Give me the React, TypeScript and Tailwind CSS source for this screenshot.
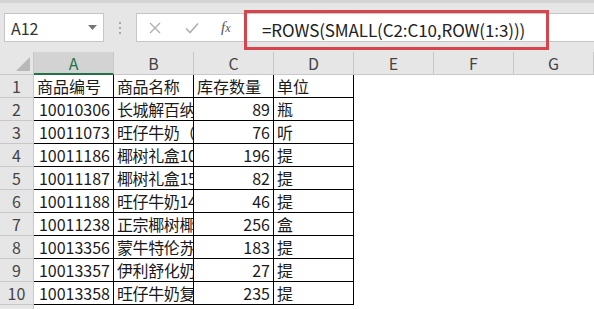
import React from 'react';

const rows: Array<[string, string, string, string]> = [
  ['商品编号', '商品名称', '库存数量', '单位'],
  ['10010306', '长城解百纳', '89', '瓶'],
  ['10011073', '旺仔牛奶（', '76', '听'],
  ['10011186', '椰树礼盒10', '196', '提'],
  ['10011187', '椰树礼盒15', '82', '提'],
  ['10011188', '旺仔牛奶14', '46', '提'],
  ['10011238', '正宗椰树椰', '256', '盒'],
  ['10013356', '蒙牛特伦苏', '183', '提'],
  ['10013357', '伊利舒化奶', '27', '提'],
  ['10013358', '旺仔牛奶复', '235', '提'],
];

const cols = ['A', 'B', 'C', 'D', 'E', 'F', 'G'];

const font = { fontFamily: '"Noto Sans CJK SC", "Noto Sans", sans-serif' };

function Toolbar() {
  return (
    <div className="h-[52px] bg-[#e6e6e6] border-t-[3px] border-[#d4d4d4] flex items-start pt-[10px] relative">
      {/* name box */}
      <div className="ml-[4px] w-[100px] h-[29px] bg-white border border-[#c6c6c6] flex items-center justify-between pl-[6px] pr-[6px]">
        <span className="text-[16px] text-[#333]">A12</span>
        <svg width="9" height="6" viewBox="0 0 9 6">
          <path d="M0 0 L9 0 L4.5 5 Z" fill="#777" />
        </svg>
      </div>
      {/* dots */}
      <div className="w-[32px] h-[29px] flex flex-col items-center justify-center gap-[3px]">
        <span className="w-[2px] h-[2px] bg-[#aaa]" />
        <span className="w-[2px] h-[2px] bg-[#aaa]" />
        <span className="w-[2px] h-[2px] bg-[#aaa]" />
      </div>
      {/* formula bar */}
      <div className="flex-1 h-[29px] bg-white border-y border-l border-[#c6c6c6] flex items-center">
        <div className="w-[108px] flex items-center">
          <svg className="ml-[12px]" width="12" height="12" viewBox="0 0 12 12">
            <path d="M1 1 L11 11 M11 1 L1 11" stroke="#b0b0b0" strokeWidth="1.4" />
          </svg>
          <svg className="ml-[24px]" width="14" height="12" viewBox="0 0 14 12">
            <path d="M1 6.5 L5 10.5 L13 1.5" stroke="#b0b0b0" strokeWidth="1.6" fill="none" />
          </svg>
          <span
            className="ml-[22px] text-[15px] italic text-[#555]"
            style={{ fontFamily: '"Liberation Serif", serif' }}
          >
            f<span className="text-[12px]">x</span>
          </span>
        </div>
      </div>
      {/* highlighted formula input */}
      <div className="absolute left-[244px] top-[7px] w-[305px] h-[40px] border-[3px] border-[#d6454b] flex items-center pl-[15px]">
        <span className="text-[17px] text-[#222] tracking-[-0.1px]">=ROWS(SMALL(C2:C10,ROW(1:3)))</span>
      </div>
    </div>
  );
}

export default function App() {
  return (
    <div className="w-[594px] h-[309px] overflow-hidden bg-white" style={font}>
      <Toolbar />
      <div className="grid grid-cols-[34px_repeat(7,80px)] auto-rows-[23px]">
        {/* header row */}
        <div className="bg-[#e6e6e6] border-r border-b border-[#c8c8c8] relative">
          <svg className="absolute right-[3px] bottom-[3px]" width="14" height="14" viewBox="0 0 14 14">
            <path d="M14 0 L14 14 L0 14 Z" fill="#b8b8b8" />
          </svg>
        </div>
        {cols.map((c) => (
          <div
            key={c}
            className={
              c === 'A'
                ? 'bg-[#d3d3d3] border-r border-[#c8c8c8] border-b-2 border-b-[#217346] flex items-center justify-center text-[16px] text-[#217346]'
                : 'bg-[#e6e6e6] border-r border-b border-[#c8c8c8] flex items-center justify-center text-[16px] text-[#444]'
            }
          >
            {c}
          </div>
        ))}
        {rows.map((r, i) => (
          <React.Fragment key={i}>
            <div className="bg-[#e6e6e6] border-r border-b border-[#c8c8c8] flex items-center justify-center text-[16px] text-[#444]">
              {i + 1}
            </div>
            <div className="border-r border-b border-black flex items-center justify-end pr-[3px] text-[16px] text-[#1a1a1a] overflow-hidden whitespace-nowrap">
              {i === 0 ? <span className="mr-auto pl-[3px]">{r[0]}</span> : r[0]}
            </div>
            <div className="border-r border-b border-black flex items-center pl-[3px] text-[16px] text-[#1a1a1a] tracking-[-0.4px] overflow-hidden whitespace-nowrap">
              {r[1]}
            </div>
            <div
              className={
                'border-r border-b border-black flex items-center text-[16px] text-[#1a1a1a] overflow-hidden whitespace-nowrap ' +
                (i === 0 ? 'pl-[3px]' : 'justify-end pr-[3px]')
              }
            >
              {r[2]}
            </div>
            <div className="border-r border-b border-black flex items-center pl-[3px] text-[16px] text-[#1a1a1a] overflow-hidden whitespace-nowrap">
              {r[3]}
            </div>
            <div />
            <div />
            <div />
          </React.Fragment>
        ))}
        <div className="bg-[#e6e6e6] border-r border-[#c8c8c8] flex items-start justify-center text-[16px] text-[#444]">
          11
        </div>
      </div>
    </div>
  );
}
